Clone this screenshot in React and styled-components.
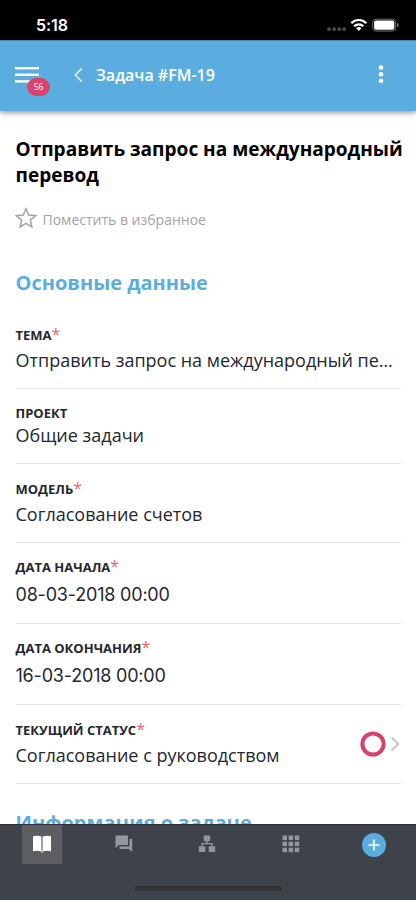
import styled, { createGlobalStyle } from 'styled-components';

const GlobalStyle = createGlobalStyle`
  * {
    box-sizing: border-box;
  }

  body {
    margin: 0;
    background-color: #fff;
    overflow: hidden;
  }
`

const Screen = styled.div`
  display: flex;
  flex-flow: column nowrap;
  width: 100%;
  height: 900px;
  font-family: 'Open Sans', 'Noto Sans', sans-serif;
  color: #23272f;
  background-color: #fff;
`

const StatusBar = styled.div`
  flex: none;
  display: flex;
  justify-content: space-between;
  align-items: center;
  height: 40px;
  padding: 10px 17px 0 36px;
  background-color: #000;
`

const Clock = styled.span`
  font: 600 16px/20px Inter, sans-serif;
  letter-spacing: -0.1px;
  color: #fff;
`

const StatusIcons = styled.svg`
  display: block;
  width: 72px;
  height: 14px;
`

const Header = styled.header`
  flex: none;
  display: flex;
  align-items: center;
  height: 71px;
  padding: 0 25px 2px 15px;
  border-top: 1px solid #4686ab;
  background-color: #5caddf;
  box-shadow: 0 2px 5px rgba(0, 0, 0, 0.4);
  z-index: 1;
`

const MenuButton = styled.button`
  position: relative;
  width: 24px;
  height: 16px;
  padding: 0;
  border: none;
  background: none;

  svg {
    display: block;
  }
`

const Badge = styled.span`
  position: absolute;
  left: 12px;
  top: 11px;
  width: 23px;
  height: 18px;
  border-radius: 9px;
  background-color: #d9436c;
  color: #fff;
  font: 400 8.5px/18px 'Open Sans', sans-serif;
  text-align: center;
`

const BackIcon = styled.svg`
  width: 9px;
  height: 14px;
  margin-left: 35px;
`

const HeaderTitle = styled.h1`
  flex: 1;
  margin: 0 0 0 13px;
  font-size: 16px;
  font-weight: 600;
  line-height: 22px;
  color: #fff;
`

const MoreIcon = styled.svg`
  width: 18px;
  height: 20px;
  margin-right: 1px;
`

const Content = styled.main`
  flex: 1;
  min-height: 0;
  overflow: hidden;
  padding: 25px 15px 0 15.5px;
`

const TaskTitle = styled.h2`
  margin: 0 -10px 0 0;
  font-size: 19.06px;
  font-weight: 700;
  line-height: 26px;
  color: #000;
`

const Favorite = styled.div`
  display: flex;
  align-items: center;
  gap: 5px;
  height: 24px;
  margin-top: 19px;
  font-size: 14px;
  color: #a3a3a3;

  svg {
    margin: -2px 0.5px 0 -0.5px;
  }
`

const SectionTitle = styled.h3`
  margin: 0;
  padding-top: ${props => props.$top}px;
  font-size: 20px;
  font-weight: 700;
  line-height: 28px;
  color: #5caddf;
`

const FieldList = styled.div`
  margin-top: 13px;
`

const Row = styled.div`
  display: flex;
  height: ${props => props.$height}px;
  padding-top: ${props => props.$top}px;
  border-bottom: 1px solid #e3e3e3;
`

const RowText = styled.div`
  flex: 1;
  min-width: 0;
`

const Label = styled.div`
  height: ${props => props.$required ? 22 : 19}px;
  font-size: 13px;
  font-weight: 700;
  line-height: 20px;
  white-space: nowrap;
`

const Star = styled.span`
  font-size: 16px;
  font-weight: 400;
  line-height: 1;
  color: #ef6461;
`

const Value = styled.div`
  overflow: hidden;
  text-overflow: ellipsis;
  white-space: nowrap;
  font-size: 18px;
  line-height: 26px;
`

const DateValue = styled(Value)`
  font-family: Inter, sans-serif;
  letter-spacing: -0.2px;
  padding-top: 3px;
`

const StatusMark = styled.svg`
  width: 41px;
  height: 28px;
  margin-top: 10px;
  margin-left: -1px;
  margin-right: 1px;
`

const TabBar = styled.nav`
  flex: none;
  display: flex;
  flex-flow: column nowrap;
  align-items: center;
  height: 76px;
  border-top: 1px solid #2e3137;
  background-color: #3e424b;
`

const Tabs = styled.div`
  display: grid;
  grid-template-columns: repeat(5, 1fr);
  justify-items: center;
  width: 100%;
`

const Tab = styled.button`
  display: flex;
  justify-content: center;
  align-items: center;
  width: 40px;
  height: 39px;
  padding: ${props => props.$active ? '0 0 2px' : '0 1px 2px 0'};
  border: none;
  background-color: ${props => props.$active ? '#5c5e62' : 'transparent'};
  color: ${props => props.$active ? '#fff' : '#93969f'};
`

const AddTab = styled(Tab)`
  padding: 0;
`

const HomeIndicator = styled.div`
  width: 147px;
  height: 5px;
  margin-top: 22px;
  border-radius: 3px;
  background-color: #333436;
`

const fields = [
  { label: 'ТЕМА', value: 'Отправить запрос на международный перевод', required: true, height: 79 },
  { label: 'ПРОЕКТ', value: 'Общие задачи', height: 75 },
  { label: 'МОДЕЛЬ', value: 'Согласование счетов', required: true, height: 79 },
  { label: 'ДАТА НАЧАЛА', value: '08-03-2018 00:00', required: true, date: true, height: 81 },
  { label: 'ДАТА ОКОНЧАНИЯ', value: '16-03-2018 00:00', required: true, date: true, height: 81 },
  { label: 'ТЕКУЩИЙ СТАТУС', value: 'Согласование с руководством', required: true, status: true, height: 79 },
];

const Field = ({ field }) => {
  const Text = field.date ? DateValue : Value;

  return (
    <Row $height={field.height} $top={field.required && !field.date ? 15 : 14}>
      <RowText>
        <Label $required={field.required}>
          {field.label}
          {field.required && <Star>*</Star>}
        </Label>
        <Text>{field.value}</Text>
      </RowText>
      {field.status &&
        <StatusMark viewBox='0 0 41 28'>
          <circle cx='14' cy='14' r='10.6' fill='none' stroke='#d5436b' strokeWidth='4' />
          <path d='M32.5 7.5l7 6.5-7 6.5' fill='none' stroke='#c4c4c4' strokeWidth='1.8' />
        </StatusMark>
      }
    </Row>
  )
}

const App = () => {
  return (
    <>
      <GlobalStyle />
      <Screen>
        <StatusBar>
          <Clock>5:18</Clock>
          {/* Signal dots, wifi, battery */}
          <StatusIcons viewBox='0 0 72 14'>
            <g fill='#4a4a4a'>
              <circle cx='2.2' cy='11.2' r='1.9' />
              <circle cx='7.2' cy='11.2' r='1.9' />
              <circle cx='12.2' cy='11.2' r='1.9' />
              <circle cx='17.2' cy='11.2' r='1.9' />
            </g>
            <g fill='none' stroke='#fff' strokeWidth='2.2'>
              <path d='M24.3 5.1a10.6 10.6 0 0 1 15 0' />
              <path d='M27.2 8.2a6.5 6.5 0 0 1 9.2 0' />
            </g>
            <path d='M29.2 10.2a3.8 3.8 0 0 1 5.2 0l-2.6 2.7z' fill='#fff' />
            <rect x='45.7' y='1.2' width='23' height='11.8' rx='3.4' fill='none' stroke='#777' strokeWidth='1' />
            <rect x='47.1' y='2.4' width='20.2' height='9.4' rx='2' fill='#fff' />
            <path d='M70 5v4.2c1.2-.4 1.7-1.2 1.7-2.1s-.5-1.7-1.7-2.1z' fill='#777' />
          </StatusIcons>
        </StatusBar>

        <Header>
          <MenuButton>
            <svg width='24' height='16' fill='#fff'>
              <rect y='0' width='24' height='2.4' />
              <rect y='6.6' width='24' height='2.4' />
              <rect y='13.2' width='24' height='2.4' />
            </svg>
            <Badge>56</Badge>
          </MenuButton>
          <BackIcon viewBox='0 0 9 14'>
            <path d='M7.7 .5L1.2 7l6.5 6.5' fill='none' stroke='#fff' strokeWidth='1.2' />
          </BackIcon>
          <HeaderTitle>Задача #FM-19</HeaderTitle>
          <MoreIcon viewBox='0 0 18 20' fill='#fff'>
            <circle cx='9' cy='2.6' r='2.3' />
            <circle cx='9' cy='9.2' r='2.3' />
            <circle cx='9' cy='15.8' r='2.3' />
          </MoreIcon>
        </Header>

        <Content>
          <TaskTitle>Отправить запрос на международный перевод</TaskTitle>
          <Favorite>
            <svg width='22' height='22' viewBox='0 0 22 22' fill='none' stroke='#a3a3a3' strokeWidth='1.5'>
              <path d='M11 1.8l2.6 6.3 7 .5-5.3 4.5 1.6 6.9L11 16.4 5.1 20l1.6-6.9L1.4 8.6l7-.5z' />
            </svg>
            Поместить в избранное
          </Favorite>

          <SectionTitle $top={38}>Основные данные</SectionTitle>
          <FieldList>
            {fields.map(field => <Field key={field.label} field={field} />)}
          </FieldList>
          <SectionTitle $top={25}>Информация о задаче</SectionTitle>
        </Content>

        <TabBar>
          <Tabs>
            <Tab $active>
              <svg width='20' height='18' viewBox='0 0 20 18' fill='currentColor'>
                <path d='M1 1.2Q5.5 .2 9.4 1.6V16.6Q5.5 15.2 1 16.2zM10.6 1.6Q14.5 .2 19 1.2V16.2Q14.5 15.2 10.6 16.6z' />
                <path d='M9.4 15.5h1.2V17.5h-1.2z' />
              </svg>
            </Tab>
            <Tab>
              <svg width='18' height='18' viewBox='0 0 18 18' fill='currentColor'>
                <path d='M1.5 .5H12a1 1 0 0 1 1 1V10H3.8L.5 13.2V1.5a1 1 0 0 1 1-1z' />
                <path d='M14.5 4h2.7v13l-3.2-3H4.5v-2.6h10z' />
              </svg>
            </Tab>
            <Tab>
              <svg width='18' height='18' viewBox='0 0 18 18' fill='currentColor'>
                <rect x='5.7' y='.5' width='6.5' height='5.8' rx='.8' />
                <rect x='.8' y='11.2' width='6.5' height='5.8' rx='.8' />
                <rect x='10.7' y='11.2' width='6.5' height='5.8' rx='.8' />
                <path d='M9 6v2.6M4 11.5V8.7h10V11.5' fill='none' stroke='currentColor' strokeWidth='1.3' />
              </svg>
            </Tab>
            <Tab>
              <svg width='18' height='18' viewBox='0 0 18 18' fill='currentColor'>
                {[0.5, 6.6, 12.7].map(y => [0.5, 6.6, 12.7].map(x =>
                  <rect key={`${x}-${y}`} x={x} y={y} width='4.5' height='4.5' />
                ))}
              </svg>
            </Tab>
            <AddTab>
              <svg width='24' height='24' viewBox='0 0 24 24'>
                <circle cx='12' cy='12' r='12' fill='#5caddf' />
                <path d='M12 6.5v11M6.5 12h11' stroke='#fff' strokeWidth='1.6' />
              </svg>
            </AddTab>
          </Tabs>
          <HomeIndicator />
        </TabBar>
      </Screen>
    </>
  )
}

export default App;
